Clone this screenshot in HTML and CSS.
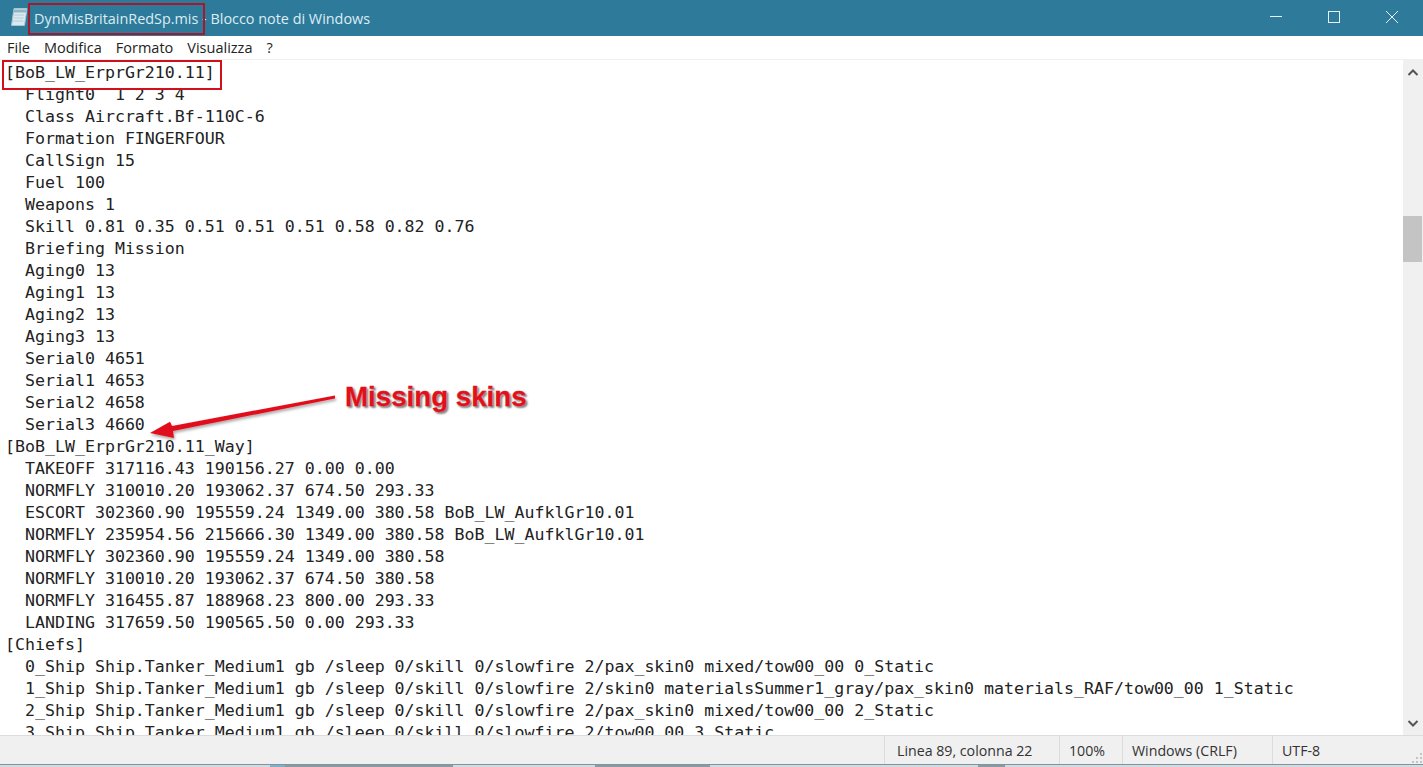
FILE: index.html
```html
<!DOCTYPE html>
<html lang="it">
<head>
<meta charset="utf-8">
<title>DynMisBritainRedSp.mis - Blocco note di Windows</title>
<link rel="stylesheet" href="styles.css">
</head>
<body>
<div class="window">
  <header class="titlebar">
    <svg class="app-icon" width="18" height="20" viewBox="0 0 18 20">
      <path d="M4 1.500h13l-2.500 17H1.500z" fill="#dbe9f1" stroke="#a9c3d0"/>
      <path d="M4 2.500h12.500l-.5 3H3.500z" fill="#8eb4c8"/>
      <path d="M4 8h10M3.600 11h10M3.200 14h10" stroke="#b5cbd7"/>
    </svg>
    <span class="title">DynMisBritainRedSp.mis - Blocco note di Windows</span>
    <div class="win-controls">
      <span class="win-btn"><svg width="14" height="14" viewBox="0 0 14 14"><path d="M1 6.500h12" stroke="#e6f2f6"/></svg></span>
      <span class="win-btn"><svg width="14" height="14" viewBox="0 0 14 14"><rect x="1.500" y="1.500" width="11" height="11" fill="none" stroke="#e6f2f6"/></svg></span>
      <span class="win-btn"><svg width="14" height="14" viewBox="0 0 14 14"><path d="M1 1l12 12M13 1L1 13" stroke="#e6f2f6"/></svg></span>
    </div>
  </header>
  <nav class="menubar">
    <span>File</span><span>Modifica</span><span>Formato</span><span>Visualizza</span><span>?</span>
  </nav>
  <main class="editor">
    <pre class="text">[BoB_LW_ErprGr210.11]
  Flight0  1 2 3 4
  Class Aircraft.Bf-110C-6
  Formation FINGERFOUR
  CallSign 15
  Fuel 100
  Weapons 1
  Skill 0.81 0.35 0.51 0.51 0.51 0.58 0.82 0.76
  Briefing Mission
  Aging0 13
  Aging1 13
  Aging2 13
  Aging3 13
  Serial0 4651
  Serial1 4653
  Serial2 4658
  Serial3 4660
[BoB_LW_ErprGr210.11_Way]
  TAKEOFF 317116.43 190156.27 0.00 0.00
  NORMFLY 310010.20 193062.37 674.50 293.33
  ESCORT 302360.90 195559.24 1349.00 380.58 BoB_LW_AufklGr10.01
  NORMFLY 235954.56 215666.30 1349.00 380.58 BoB_LW_AufklGr10.01
  NORMFLY 302360.90 195559.24 1349.00 380.58
  NORMFLY 310010.20 193062.37 674.50 380.58
  NORMFLY 316455.87 188968.23 800.00 293.33
  LANDING 317659.50 190565.50 0.00 293.33
[Chiefs]
  0_Ship Ship.Tanker_Medium1 gb /sleep 0/skill 0/slowfire 2/pax_skin0 mixed/tow00_00 0_Static
  1_Ship Ship.Tanker_Medium1 gb /sleep 0/skill 0/slowfire 2/skin0 materialsSummer1_gray/pax_skin0 materials_RAF/tow00_00 1_Static
  2_Ship Ship.Tanker_Medium1 gb /sleep 0/skill 0/slowfire 2/pax_skin0 mixed/tow00_00 2_Static
  3_Ship Ship.Tanker_Medium1 gb /sleep 0/skill 0/slowfire 2/tow00_00 3_Static</pre>
    <div class="scrollbar">
      <svg class="arrow arrow-up" viewBox="0 0 20 23"><path d="M5.500 15l4.500-4.500 4.500 4.500" fill="none" stroke="#555" stroke-width="2"/></svg>
      <div class="track"><div class="thumb"></div></div>
      <svg class="arrow arrow-down" viewBox="0 0 20 22"><path d="M5.500 8l4.500 4.500 4.500-4.500" fill="none" stroke="#555" stroke-width="2"/></svg>
    </div>
  </main>
  <footer class="statusbar">
    <span class="cell cell-pos">Linea 89, colonna 22</span>
    <span class="cell cell-zoom">100%</span>
    <span class="cell cell-eol">Windows (CRLF)</span>
    <span class="cell cell-enc">UTF-8</span>
    <svg class="grip" width="12" height="12" viewBox="0 0 12 12"><path d="M9 1h2v2H9zM5 5h2v2H5zM9 5h2v2H9zM1 9h2v2H1zM5 9h2v2H5zM9 9h2v2H9z" fill="#c4c4c4"/></svg>
  </footer>
  <div class="taskstrip">
    <span class="strip-icon"></span><span class="strip-bar strip-a"></span><span class="strip-bar strip-b"></span><span class="strip-bar strip-c"></span>
  </div>
</div>

<div class="mark mark-title"></div>
<div class="mark mark-section"></div>
<svg class="annot-arrow" width="210" height="60" viewBox="0 0 210 60">
  <defs><filter id="sh" x="-10%" y="-30%" width="120%" height="170%"><feDropShadow dx="1" dy="2" stdDeviation="1.500" flood-color="#000" flood-opacity=".35"/></filter></defs>
  <path d="M188 15.500L25 46l-2-4.300L3 53l24 5-1-7 162-32.500z" fill="#e2101a" filter="url(#sh)"/>
</svg>
<div class="callout">Missing skins</div>
</body>
</html>
```
FILE: styles.css
```css
* { box-sizing: border-box; }
html, body { margin: 0; height: 100%; overflow: hidden; }
body { background: #fff; position: relative; }
.window { width: 1423px; height: 767px; display: flex; flex-direction: column; font-family: "Open Sans", "Noto Sans", sans-serif; }

.titlebar { height: 36px; background: #2e7a9b; display: flex; align-items: center; padding-left: 10px; color: #dcedf3; flex: none; }
.app-icon { flex: none; margin-right: 6px; position: relative; top: -1px; }
.title { font-size: 14.4px; white-space: nowrap; }
.win-controls { margin-left: auto; margin-right: 2px; display: flex; }
.win-btn { width: 58px; height: 36px; display: flex; align-items: center; justify-content: center; position: relative; top: -1px; }

.menubar { height: 24px; flex: none; display: flex; align-items: center; gap: 14px; padding-left: 7px; font-size: 14.5px; color: #222; background: #fff; border-bottom: 1px solid #f0f0f0; }

.editor { flex: 1; min-height: 0; display: flex; overflow: hidden; background: #fff; }
.text { flex: 1; margin: 0; padding: 2px 0 0 5px; font-family: "DejaVu Sans Mono", "Liberation Mono", monospace; font-size: 16.6px; line-height: 22px; color: #222; overflow: hidden; white-space: pre; }
.scrollbar { width: 20px; flex: none; background: #f0f0f0; display: flex; flex-direction: column; }
.arrow { flex: none; width: 20px; }
.arrow-up { height: 23px; }
.arrow-down { height: 22px; }
.track { flex: 1; padding: 133px 1px 0 0; }
.thumb { height: 46px; background: #c4c4c4; }

.statusbar { height: 30px; flex: none; display: flex; align-items: center; background: #f0f0f0; border-top: 1px solid #dcdcdc; border-bottom: 1px solid #7f95a0; font-size: 14.2px; color: #333; padding-left: 884px; position: relative; }
.cell { height: 100%; display: flex; align-items: center; border-left: 1px solid #dcdcdc; padding-left: 9px; white-space: nowrap; }
.cell-pos { width: 175px; padding-left: 12px; }
.cell-zoom { width: 63px; }
.cell-eol { width: 150px; }
.cell-enc { width: 100px; }
.grip { position: absolute; right: 0; bottom: 0; }

.taskstrip { height: 2px; flex: none; background: #cfdde3; display: flex; }
.strip-icon { width: 15px; margin-left: 270px; background: #7fb0c6; }
.strip-bar { height: 100%; background: #8b99a0; }
.strip-a { width: 168px; }
.strip-b { width: 115px; margin-left: 142px; }
.strip-c { width: 27px; margin-left: 268px; }

.mark { position: absolute; border: 2px solid #d2101c; }
.mark-title { left: 28px; top: 3px; width: 177px; height: 32px; border-color: #a8182c; }
.mark-section { left: 2px; top: 60px; width: 220px; height: 30px; }
.annot-arrow { position: absolute; left: 147px; top: 380px; }
.callout { position: absolute; left: 345px; top: 380px; font: bold 27.7px/34px "Liberation Sans", Arial, sans-serif; color: #e2101a; white-space: nowrap; -webkit-text-stroke: .3px #e2101a; text-shadow: 0 0 2px #fff, 1px 1px 2px #555, 0 0 3px #fff, 2px 2px 2px #999; }
```
